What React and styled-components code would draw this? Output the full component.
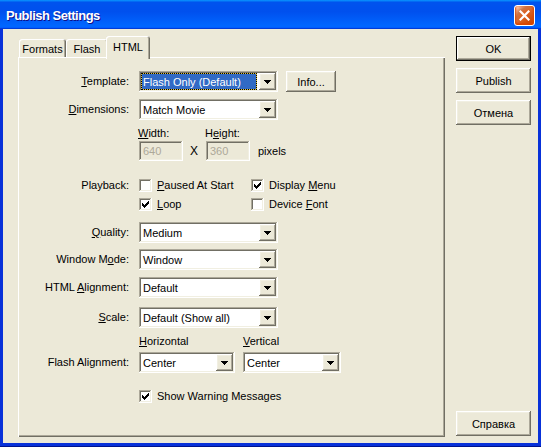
import React from "react";
import styled, { createGlobalStyle, css } from "styled-components";

const GlobalStyle = createGlobalStyle`
  html, body {
    margin: 0;
    padding: 0;
    background: #ECE9D8;
  }
  body {
    font-family: "Liberation Sans", Arial, sans-serif;
    font-size: 11px;
    color: #000;
  }
`;

const raised = css`
  box-shadow: inset -1px -1px #716F64, inset 1px 1px #FFFFFF,
    inset -2px -2px #ACA899, inset 2px 2px #F1EFE2;
`;
const sunken = css`
  box-shadow: inset -1px -1px #FFFFFF, inset 1px 1px #ACA899,
    inset -2px -2px #F1EFE2, inset 2px 2px #716F64;
`;

const Window = styled.div`
  width: 541px;
  height: 447px;
  display: flex;
  flex-direction: column;
  background: #00138C;
`;

const TitleBar = styled.div`
  height: 29px;
  flex: none;
  display: flex;
  align-items: center;
  justify-content: space-between;
  padding: 0 6px;
  box-sizing: border-box;
  background: linear-gradient(180deg, #0997ff, #0053ee 8%, #0050ee 40%, #0066ff 88%, #0066ff 93%, #005bff 95%, #003dd7 96%, #003dd7);
`;

const Title = styled.span`
  color: #fff;
  font: bold 13px "Liberation Sans", Arial, sans-serif;
  letter-spacing: -0.5px;
  text-shadow: 1px 1px #0F1089;
  margin-top: 2px;
`;

const CloseButton = styled.div`
  width: 21px;
  height: 21px;
  margin-top: 2px;
  box-sizing: border-box;
  border: 1px solid #fff;
  border-radius: 3px;
  display: flex;
  align-items: center;
  justify-content: center;
  background: radial-gradient(circle at 90% 90%, #cc4600 0, #dc6527 55%, #cd7546 70%, #ffccb2 90%, #fff 100%);
  box-shadow: inset 0 -1px 2px 1px #da4600;
`;

const Client = styled.div`
  flex: 1;
  display: flex;
  background: #ECE9D8;
  border: solid #0831D9;
  border-width: 0 3px 3px;
  margin-bottom: 1px;
  padding: 7px 7px 6px 15px;
`;

const TabArea = styled.div`
  width: 427px;
  display: flex;
  flex-direction: column;
`;

const TabStrip = styled.div`
  height: 21px;
  display: flex;
  align-items: flex-end;
  padding-left: 1px;
`;

const Tab = styled.div`
  width: ${p => p.$w}px;
  height: 18px;
  box-sizing: border-box;
  display: flex;
  align-items: center;
  justify-content: center;
  padding-top: 1px;
  background: #ECE9D8;
  border-radius: 3px 3px 0 0;
  box-shadow: inset 1px 1px #fff, inset -1px 0 #716F64, inset -2px 0 #ACA899;
  ${p => p.$active && css`
    height: 23px;
    margin: 0 0 -2px -2px;
    padding-top: 0;
    padding-bottom: 2px;
    position: relative;
    z-index: 1;
  `}
`;

const Panel = styled.div`
  height: 380px;
  box-sizing: border-box;
  padding-top: 14px;
  background: #ECE9D8;
  box-shadow: inset 1px 1px #fff, inset -1px -1px #716F64, inset -2px -2px #ACA899;
`;

const Row = styled.div`
  display: flex;
  align-items: ${p => p.$align || "center"};
  margin-top: ${p => p.$top || 0}px;
`;

const Label = styled.div`
  width: 111px;
  margin-right: 10px;
  flex: none;
  text-align: right;
  white-space: nowrap;
  line-height: 13px;
`;

const Indent = styled.div`
  margin-left: 121px;
  margin-top: ${p => p.$top || 0}px;
`;

const ComboBox = styled.div`
  width: ${p => p.$w || 139}px;
  height: 21px;
  margin-left: ${p => p.$left || 0}px;
  box-sizing: border-box;
  padding: 2px;
  display: flex;
  flex: none;
  background: #fff;
  ${sunken};
`;

const ComboText = styled.div`
  flex: 1;
  display: flex;
  align-items: center;
  padding-left: 2px;
  margin-right: 2px;
  white-space: nowrap;
  ${p => p.$selected && css`
    background: #316AC5;
    color: #fff;
    box-shadow: inset 0 0 0 1px #E2C33A;
    outline: 1px dotted #000;
    outline-offset: -1px;
  `}
`;

const DropButton = styled.div`
  width: 17px;
  height: 17px;
  flex: none;
  display: flex;
  align-items: center;
  justify-content: center;
  background: #ECE9D8;
  ${raised};
`;

const Button = styled.div`
  width: ${p => p.$w || 75}px;
  height: ${p => p.$h || 25}px;
  box-sizing: border-box;
  flex: none;
  display: flex;
  align-items: center;
  justify-content: center;
  background: #ECE9D8;
  ${raised};
  ${p => p.$default && css`
    box-shadow: inset 0 0 0 1px #000, inset -2px -2px #716F64, inset 2px 2px #fff,
      inset -3px -3px #ACA899, inset 3px 3px #F1EFE2;
  `}
  ${p => p.$push && css`margin-top: auto; margin-bottom: 1px;`}
  ${p => p.$left && css`margin-left: ${p.$left}px;`}
`;

const ButtonColumn = styled.div`
  width: 75px;
  margin-left: 11px;
  display: flex;
  flex-direction: column;
  gap: 7px;
`;

const SizeGrid = styled.div`
  display: grid;
  grid-template-columns: 44px 23px 44px auto;
  grid-template-rows: 13px 20px;
  row-gap: 1px;
  align-items: center;
  line-height: 13px;
`;

const Caption = styled.div`
  margin-left: -1px;
  white-space: nowrap;
`;

const Field = styled.div`
  height: 20px;
  box-sizing: border-box;
  padding-left: 4px;
  display: flex;
  align-items: center;
  color: #ACA899;
  background: #ECE9D8;
  ${sunken};
`;

const Times = styled.div`
  text-align: center;
  font-size: 12px;
  padding-right: 1px;
`;

const Pixels = styled.div`
  margin-left: 8px;
`;

const CheckGrid = styled.div`
  display: grid;
  grid-template-columns: 112px auto;
  row-gap: 6px;
`;

const CheckItem = styled.div`
  display: flex;
  align-items: center;
  gap: 5px;
  height: 13px;
  line-height: 13px;
  white-space: nowrap;
`;

const Box = styled.span`
  width: 13px;
  height: 13px;
  box-sizing: border-box;
  flex: none;
  display: inline-flex;
  align-items: center;
  justify-content: center;
  background: #fff;
  ${sunken};
`;

const AlignCaptions = styled.div`
  display: flex;
  line-height: 13px;
`;

const AlignCaption = styled.div`
  width: ${p => p.$w}px;
`;

const Arrow = () => (
  <svg width="7" height="4" viewBox="0 0 7 4" shapeRendering="crispEdges">
    <path d="M0 0h7v1H0zM1 1h5v1H1zM2 2h3v1H2zM3 3h1v1H3z" fill="#000" />
  </svg>
);

const Tick = () => (
  <svg width="7" height="7" viewBox="0 0 7 7" shapeRendering="crispEdges">
    <path
      d="M6 0h1v1H6zM5 1h2v1H5zM0 2h1v1H0zM4 2h3v1H4zM0 3h2v1H0zM3 3h3v1H3zM0 4h5v1H0zM1 5h3v1H1zM2 6h1v1H2z"
      fill="#000"
    />
  </svg>
);

const Combo = ({ value, width, left, selected }) => (
  <ComboBox $w={width} $left={left}>
    <ComboText $selected={selected}>{value}</ComboText>
    <DropButton>
      <Arrow />
    </DropButton>
  </ComboBox>
);

const Checkbox = ({ checked, children }) => (
  <CheckItem>
    <Box>{checked && <Tick />}</Box>
    <span>{children}</span>
  </CheckItem>
);

const App = () => (
  <>
    <GlobalStyle />
    <Window>
      <TitleBar>
        <Title>Publish Settings</Title>
        <CloseButton>
          <svg width="11" height="11" viewBox="0 0 11 11">
            <path d="M1.5 1.5l8 8M9.5 1.5l-8 8" stroke="#fff" strokeWidth="2.2" strokeLinecap="square" />
          </svg>
        </CloseButton>
      </TitleBar>
      <Client>
        <TabArea>
          <TabStrip>
            <Tab $w={47}>Formats</Tab>
            <Tab $w={42}>Flash</Tab>
            <Tab $w={44} $active>HTML</Tab>
          </TabStrip>
          <Panel>
            <Row>
              <Label><u>T</u>emplate:</Label>
              <Combo value="Flash Only (Default)" selected />
              <Button $w={50} $h={21} $left={8}>Info...</Button>
            </Row>
            <Row $top={7}>
              <Label><u>D</u>imensions:</Label>
              <Combo value="Match Movie" />
            </Row>
            <Indent $top={7}>
              <SizeGrid>
                <Caption><u>W</u>idth:</Caption>
                <span />
                <Caption>H<u>e</u>ight:</Caption>
                <span />
                <Field>640</Field>
                <Times>X</Times>
                <Field>360</Field>
                <Pixels>pixels</Pixels>
              </SizeGrid>
            </Indent>
            <Row $top={18} $align="flex-start">
              <Label>Playback:</Label>
              <CheckGrid>
                <Checkbox><u>P</u>aused At Start</Checkbox>
                <Checkbox checked>Display <u>M</u>enu</Checkbox>
                <Checkbox checked><u>L</u>oop</Checkbox>
                <Checkbox>Device <u>F</u>ont</Checkbox>
              </CheckGrid>
            </Row>
            <Row $top={11}>
              <Label><u>Q</u>uality:</Label>
              <Combo value="Medium" />
            </Row>
            <Row $top={6}>
              <Label>Window M<u>o</u>de:</Label>
              <Combo value="Window" />
            </Row>
            <Row $top={7}>
              <Label>HTML <u>A</u>lignment:</Label>
              <Combo value="Default" />
            </Row>
            <Row $top={9}>
              <Label><u>S</u>cale:</Label>
              <Combo value="Default (Show all)" />
            </Row>
            <Indent $top={7}>
              <AlignCaptions>
                <AlignCaption $w={104}><u>H</u>orizontal</AlignCaption>
                <AlignCaption $w={98}><u>V</u>ertical</AlignCaption>
              </AlignCaptions>
            </Indent>
            <Row $top={4}>
              <Label>Flash Alignment:</Label>
              <Combo value="Center" width={96} />
              <Combo value="Center" width={98} left={8} />
            </Row>
            <Indent $top={17}>
              <Checkbox checked>Show Warning Messages</Checkbox>
            </Indent>
          </Panel>
        </TabArea>
        <ButtonColumn>
          <Button $default>OK</Button>
          <Button>Publish</Button>
          <Button>Отмена</Button>
          <Button $push>Справка</Button>
        </ButtonColumn>
      </Client>
    </Window>
  </>
);

export default App;
